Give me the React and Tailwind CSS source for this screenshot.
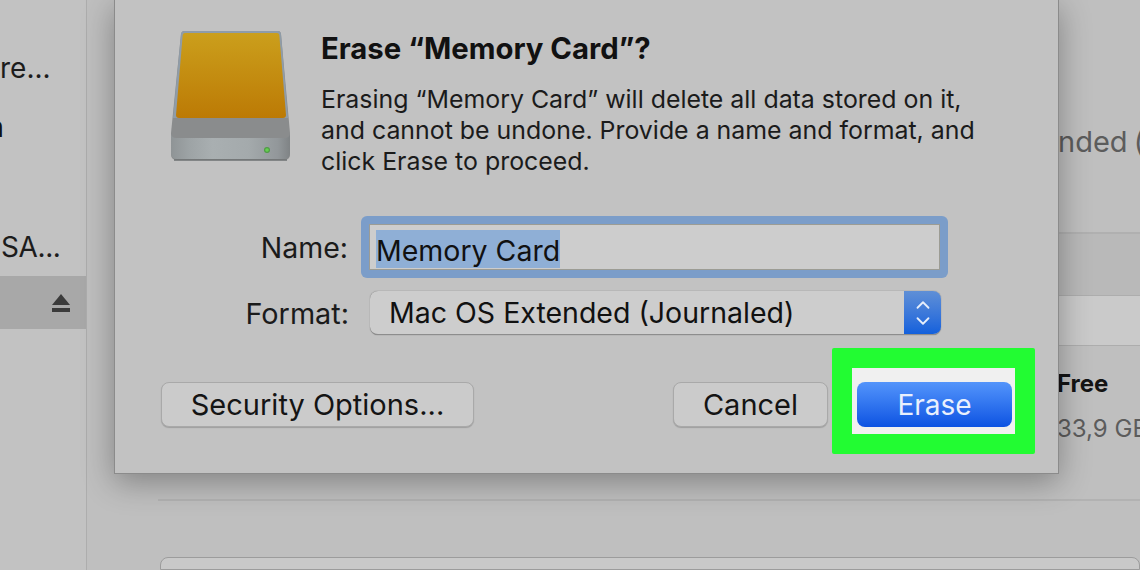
import { ChevronUp, ChevronDown } from 'lucide-react';

function DriveIcon() {
  return (
    <svg width="122" height="131" viewBox="0 0 122 131" className="shrink-0">
      <defs>
        <linearGradient id="face" x1="0" y1="0" x2="0" y2="1">
          <stop offset="0" stopColor="#cb9f1c" />
          <stop offset="1" stopColor="#bc7a05" />
        </linearGradient>
        <linearGradient id="front" x1="0" y1="0" x2="1" y2="0">
          <stop offset="0" stopColor="#8f9496" />
          <stop offset="0.15" stopColor="#9da3a5" />
          <stop offset="0.35" stopColor="#a9afb1" />
          <stop offset="0.65" stopColor="#a4aaac" />
          <stop offset="0.9" stopColor="#92979a" />
          <stop offset="1" stopColor="#7f8385" />
        </linearGradient>
      </defs>
      {/* shell */}
      <path d="M11 3 Q11.500 0 14.500 0 L108 0 Q110.500 0 111 3 L120 102 L120 123 Q120 129 114 129 L7 129 Q1 129 1 123 L1 102 Z" fill="#8a8c8d" />
      <path d="M11 3 Q11.500 0 14.500 0 L108 0 Q110.500 0 111 3 L118 87 L3 87 Z" fill="#8f9ca8" />
      {/* face */}
      <path d="M15 2 L107 2 Q109 2 109.300 4 L116 84 Q116 87 113 87 L9 87 Q6 87 6 84 L12.700 4 Q13 2 15 2 Z" fill="url(#face)" />
      {/* front band */}
      <path d="M1 103 Q2 107 6 107 L115 107 Q119 107 120 103 L120 122 Q120 128 114 128 L7 128 Q1 128 1 122 Z" fill="url(#front)" />
      <path d="M4 129 L117 129" stroke="#6d7072" strokeWidth="1.500" />
      <circle cx="97" cy="119" r="3" fill="#4f9d45" />
      <circle cx="97" cy="119" r="1.800" fill="#66cf52" />
    </svg>
  );
}

function Button({ label, className }) {
  return (
    <button className={`h-[45px] rounded-[8px] border border-[#a9a9a9] bg-[#cbcbcb] text-[29px] leading-none text-[#141414] shadow-[0_1px_1px_rgba(0,0,0,0.18)] ${className}`}>
      {label}
    </button>
  );
}

export default function App() {
  return (
    <div className="relative flex h-[570px] w-[1140px] overflow-hidden bg-[#c0c0c0] font-['Inter','Liberation_Sans',sans-serif]">

      {/* Sidebar */}
      <aside className="flex h-full w-[87px] shrink-0 flex-col border-r border-[#adadad] bg-[#c2c2c2] text-[28px] text-[#1c1c1c]">
        <div className="mt-[50px] h-[36px] leading-[36px]">re...</div>
        <div className="mt-[23px] h-[36px] -translate-x-[13px] leading-[36px] font-medium text-[#111111]">n</div>
        <div className="mt-[84px] h-[36px] pl-[1px] leading-[36px] tracking-[-0.4px]">SA...</div>
        <div className="mt-[11px] flex h-[53px] items-center justify-end bg-[#a8a8a8] pr-[15px]">
          <svg width="20" height="20" viewBox="0 0 20 20" fill="#3b3b3b">
            <path d="M10 1 L19 12 L1 12 Z" />
            <rect x="1" y="15" width="18" height="4" />
          </svg>
        </div>
      </aside>

      {/* Main panel, mostly behind the sheet */}
      <main className="flex h-full min-w-0 flex-1 flex-col bg-[#bfbfbf] pl-[71px]">
        <div className="h-[234px] shrink-0 border-b-2 border-[#b0b0b0] pl-[900px] pt-[122px] text-[29px] leading-[40px] whitespace-nowrap text-[#5c5c5c] [word-spacing:-2px]">
          nded (
        </div>
        <div className="h-[61px] shrink-0 bg-[#b9b9b9]" />
        <div className="h-[51px] shrink-0 border-y border-[#adadad] bg-[#cacaca]" />
        <div className="h-[155px] shrink-0 border-b-2 border-[#b2b2b2] pl-[899px] whitespace-nowrap">
          <div className="pt-[22px] text-[24px] leading-[32px] font-bold text-[#141414]">Free</div>
          <div className="pt-[13px] text-[24px] leading-[32px] text-[#5c5c5c]">33,9 GB</div>
        </div>
        <div className="ml-[2px] mt-[56px] h-[40px] rounded-t-[8px] border border-[#9c9c9c] bg-[#c9c9c9]" />
      </main>

      {/* Erase sheet */}
      <section className="absolute left-[114px] top-0 flex h-[474px] w-[945px] flex-col border-x border-b border-[#8b8b8b] bg-[#c2c2c2] pl-[46px] pr-[23px] shadow-[0_8px_30px_rgba(0,0,0,0.32)]">
        <div className="flex items-start pt-[31px]">
          <div className="ml-[9px]"><DriveIcon /></div>
          <div className="ml-[29px] -mt-[1px] text-[#1b1b1b]">
            <h1 className="text-[29.300px] leading-[38px] font-bold text-[#111111]">Erase “Memory Card”?</h1>
            <p className="mt-[16px] text-[24.9px] leading-[31px]">
              Erasing “Memory Card” will delete all data stored on it,<br />
              and cannot be undone. Provide a name and format, and<br />
              click Erase to proceed.
            </p>
          </div>
        </div>

        <div className="mt-[39px] flex items-center">
          <label className="w-[187px] translate-y-[1px] text-right text-[28.500px] leading-none text-[#1b1b1b]">Name:</label>
          <div className="ml-[13px] flex h-[62px] w-[587px] items-center rounded-[6px] bg-[#7b9dc9] p-[8px]">
            <div className="flex h-full w-full items-center border border-[#9c9c94] bg-[#cdcdcd] pl-[6px]">
              <span className="inline-block h-[38px] translate-y-[2px] bg-[#8fafd6] text-[28.500px] leading-[42px] text-[#111111]">Memory Card</span>
            </div>
          </div>
        </div>

        <div className="mt-[13px] flex items-center">
          <label className="w-[188px] translate-y-[1px] text-right text-[28.800px] leading-none text-[#1b1b1b]">Format:</label>
          <div className="ml-[21px] flex h-[44px] w-[571px] items-center overflow-hidden rounded-[8px] border-b border-[#8d8d8d] bg-[#cdcdcd] shadow-[0_0_1px_rgba(0,0,0,0.5)]">
            <span className="flex-1 translate-y-[1px] pl-[19px] text-[28.500px] leading-none text-[#111111]">Mac OS Extended (Journaled)</span>
            <div className="flex h-full w-[37px] flex-col items-center justify-center bg-gradient-to-b from-[#5f8fd6] to-[#1260dc] text-[#e6eefb]">
              <ChevronUp size={22} strokeWidth={2} className="-mb-[3px]" />
              <ChevronDown size={22} strokeWidth={2} className="-mt-[3px]" />
            </div>
          </div>
        </div>

        <div className="mt-[47px] flex items-start justify-between">
          <Button label="Security Options..." className="w-[313px]" />
          <div className="flex items-start gap-[4px]">
            <Button label="Cancel" className="w-[155px]" />
            {/* Green annotation around the default button */}
            <div className="-mb-[26px] -mt-[34px] rounded-[2px] border-[20px] border-[#22fc32] bg-[#f0f0f0] pb-[7px] pl-[5px] pr-[3px] pt-[14px]">
              <button className="h-[45px] w-[155px] rounded-[8px] bg-gradient-to-b from-[#5394fb] to-[#0b52e2] text-[28px] leading-none text-[#e9f0fd]">
                Erase
              </button>
            </div>
          </div>
        </div>
      </section>
    </div>
  );
}
